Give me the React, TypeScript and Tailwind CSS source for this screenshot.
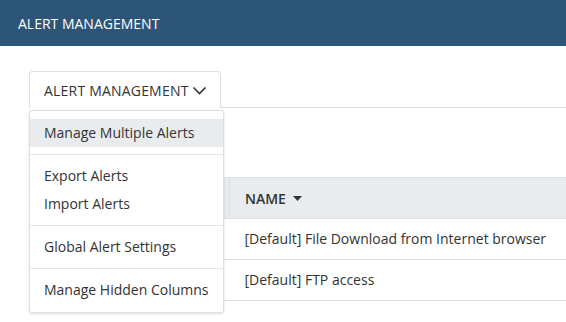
import React from 'react';

const menu: string[][] = [
  ['Manage Multiple Alerts'],
  ['Export Alerts', 'Import Alerts'],
  ['Global Alert Settings'],
  ['Manage Hidden Columns'],
];

const rows = ['[Default] File Download from Internet browser', '[Default] FTP access'];

const App: React.FC = () => {
  return (
    <div className="w-[566px] h-[322px] overflow-hidden bg-white text-[14px] text-[#333] font-['Open_Sans',sans-serif]">
      {/* Top bar */}
      <header className="h-[46px] bg-[#2d5577] px-[18px] flex items-center text-white">
        ALERT MANAGEMENT
      </header>

      <div className="relative pl-[29px] pt-[25px]">
        {/* Tabs */}
        <div className="flex">
          <button className="h-[37px] w-[192px] pl-[14px] flex items-center gap-[3px] border border-b-0 border-[#dcdfe3] rounded-t-[4px] text-[#333] tracking-[0.2px]">
            ALERT MANAGEMENT
            <svg width="15" height="9" viewBox="0 0 15 9" className="mt-[1px]">
              <path d="M1.5 1.5l6 6 6-6" fill="none" stroke="#333" strokeWidth="1.6" />
            </svg>
          </button>
          <div className="flex-1 border-b border-[#dcdfe3]" />
        </div>

        {/* Toolbar button hidden under the menu */}
        <div className="mt-[10px] h-[32px] w-[100px] border-l-2 border-[#2d4a63]" />

        {/* Table */}
        <table className="mt-[27px] w-full border-collapse border-l border-[#dcdfe3] text-left">
          <thead>
            <tr className="h-[41px] bg-[#e9ecef] border-y border-[#dcdfe3]">
              <th className="w-[200px] border-r border-[#dcdfe3]" />
              <th className="pl-[15px] font-semibold">
                <span className="inline-flex items-center gap-[7px]">
                  NAME
                  <svg width="9" height="5" viewBox="0 0 9 5"><path d="M0 0h9L4.5 5z" fill="#333" /></svg>
                </span>
              </th>
            </tr>
          </thead>
          <tbody>
            {rows.map((r) => (
              <tr key={r} className="h-[41px] border-b border-[#dcdfe3]">
                <td />
                <td className="pl-[15px] pb-[1px]">{r}</td>
              </tr>
            ))}
          </tbody>
        </table>

        {/* Dropdown menu */}
        <div className="absolute left-[29px] top-[64px] w-[195px] py-[8px] bg-white border border-[#dcdfe3] rounded-[3px] shadow-[0_1px_3px_rgba(0,0,0,0.12)]">
          {menu.map((group, gi) => (
            <div key={gi}>
              {gi > 0 && <div className="my-[7px] h-px bg-[#e3e6e9]" />}
              {group.map((item) => (
                <div
                  key={item}
                  className={`h-[28px] px-[14px] pb-[1px] flex items-center whitespace-nowrap ${gi === 0 ? 'bg-[#e9ecef]' : ''}`}
                >
                  {item}
                </div>
              ))}
            </div>
          ))}
        </div>
      </div>
    </div>
  );
};

export default App;
